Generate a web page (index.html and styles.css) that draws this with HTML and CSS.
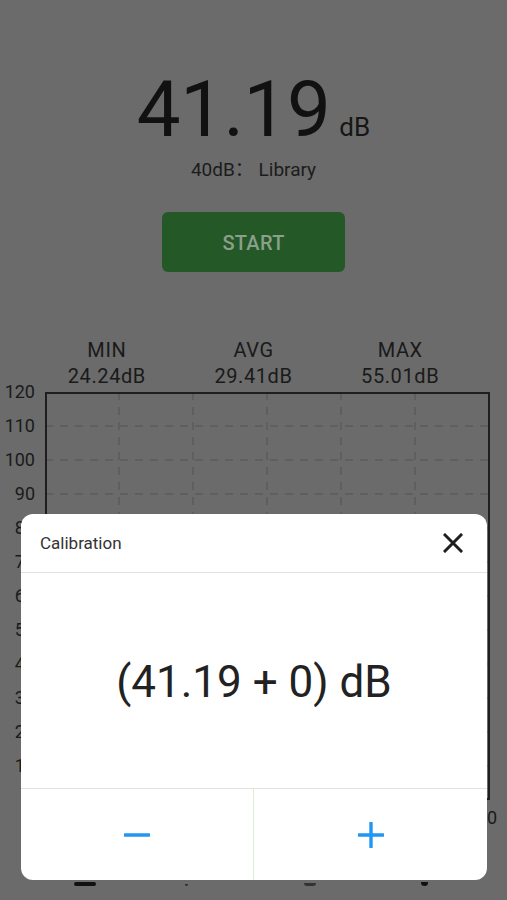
FILE: index.html
```html
<!DOCTYPE html>
<html lang="en">
<head>
<meta charset="utf-8">
<title>Sound Meter</title>
<link rel="stylesheet" href="styles.css">
</head>
<body>
<div class="screen">
  <div class="reading">
    <span class="value">41.19</span>
    <span class="unit">dB</span>
  </div>
  <div class="level">40dB： Library</div>
  <button class="start">START</button>

  <div class="stats">
    <div class="stat"><div>MIN</div><div>24.24dB</div></div>
    <div class="stat"><div>AVG</div><div>29.41dB</div></div>
    <div class="stat"><div>MAX</div><div>55.01dB</div></div>
  </div>

  <div class="chart">
    <div class="yaxis">
      <span>120</span><span>110</span><span>100</span><span>90</span><span>80</span><span>70</span><span>60</span>
      <span>50</span><span>40</span><span>30</span><span>20</span><span>10</span><span>0</span>
    </div>
    <div class="plot">
      <svg width="445" height="408" viewBox="0 0 445 408">
        <g stroke="#555" stroke-width="1" stroke-dasharray="8 7" fill="none">
          <line x1="0" y1="34" x2="445" y2="34"/>
          <line x1="0" y1="68" x2="445" y2="68"/>
          <line x1="0" y1="102" x2="445" y2="102"/>
          <line x1="0" y1="136" x2="445" y2="136"/>
          <line x1="0" y1="170" x2="445" y2="170"/>
          <line x1="0" y1="204" x2="445" y2="204"/>
          <line x1="0" y1="238" x2="445" y2="238"/>
          <line x1="0" y1="272" x2="445" y2="272"/>
          <line x1="0" y1="306" x2="445" y2="306"/>
          <line x1="0" y1="340" x2="445" y2="340"/>
          <line x1="0" y1="374" x2="445" y2="374"/>
          <line x1="74" y1="0" x2="74" y2="408"/>
          <line x1="148" y1="0" x2="148" y2="408"/>
          <line x1="222" y1="0" x2="222" y2="408"/>
          <line x1="296" y1="0" x2="296" y2="408"/>
          <line x1="370" y1="0" x2="370" y2="408"/>
        </g>
        <rect x="1" y="1" width="443" height="406" fill="none" stroke="#1e1e1e" stroke-width="2"/>
      </svg>
    </div>
  </div>
  <div class="xaxis"><span>0</span><span>30</span></div>

  <nav class="tabs">
    <span class="tab-bar"></span>
    <span class="tab-dot small"></span>
    <span class="tab-curve"></span>
    <span class="tab-dot"></span>
  </nav>
</div>

<div class="dialog">
  <div class="dialog-head">
    <span class="dialog-title">Calibration</span>
    <svg class="close" width="20" height="20" viewBox="0 0 20 20">
      <path d="M2 2 L18 18 M18 2 L2 18" stroke="#1f1f1f" stroke-width="3" stroke-linecap="square"/>
    </svg>
  </div>
  <div class="dialog-body">(41.19 + 0) dB</div>
  <div class="dialog-actions">
    <div class="action">
      <svg width="26" height="26" viewBox="0 0 26 26"><path d="M1 13 H25" stroke="#2196f3" stroke-width="3.4" stroke-linecap="round"/></svg>
    </div>
    <div class="action">
      <svg width="26" height="26" viewBox="0 0 26 26"><path d="M1 13 H25 M13 1 V25" stroke="#2196f3" stroke-width="3.4" stroke-linecap="round"/></svg>
    </div>
  </div>
</div>
</body>
</html>
```

FILE: styles.css
```css
* { box-sizing: border-box; }

html, body {
  margin: 0;
  padding: 0;
}

body {
  background: #6b6b6b;
  font-family: Roboto, "Noto Sans", "Noto Sans CJK SC", sans-serif;
  color: #161616;
  width: 507px;
  height: 900px;
  overflow: hidden;
}

.screen {
  display: flex;
  flex-direction: column;
  align-items: center;
  padding-top: 71px;
}

.reading {
  display: flex;
  align-items: baseline;
  gap: 9px;
  height: 78px;
  line-height: 78px;
}

.value {
  font-size: 78px;
  color: #111;
  letter-spacing: -0.5px;
}

.unit {
  font-size: 26px;
  color: #161616;
}

.level {
  margin-top: 10px;
  font-size: 19px;
  line-height: 22px;
  color: #1c1c1c;
}

.start {
  margin-top: 31px;
  width: 183px;
  height: 60px;
  border: none;
  border-radius: 6px;
  background: #245826;
  color: #8aa08b;
  font-family: Roboto, sans-serif;
  font-weight: 500;
  font-size: 20px;
  letter-spacing: 0.3px;
  padding-top: 3px;
}

.stats {
  margin-top: 65px;
  width: 440px;
  display: grid;
  grid-template-columns: repeat(3, 1fr);
}

.stat {
  text-align: center;
  font-size: 20px;
  letter-spacing: 0.6px;
  line-height: 26px;
  color: #1a1a1a;
}

.chart {
  margin-top: 3px;
  width: 507px;
  display: flex;
  align-items: flex-start;
  gap: 10px;
}

.yaxis {
  width: 35px;
  margin-top: -17px;
  margin-bottom: -17px;
  display: flex;
  flex-direction: column;
  align-items: flex-end;
}

.yaxis span {
  height: 34px;
  line-height: 34px;
  font-size: 18px;
  color: #1a1a1a;
}

.plot {
  width: 445px;
  height: 408px;
}

.plot svg { display: block; }

.xaxis {
  width: 507px;
  display: flex;
  justify-content: space-between;
  padding: 7px 10px 0 40px;
  font-size: 18px;
  line-height: 22px;
  color: #1a1a1a;
}

.tabs {
  margin-top: 33px;
  width: 507px;
  height: 24px;
  position: relative;
}

.tab-bar, .tab-dot, .tab-curve {
  position: absolute;
  bottom: 0;
  background: #111;
}

.tab-bar { left: 74px; width: 22px; height: 4px; border-radius: 2px; }
.tab-dot { left: 421px; width: 7px; height: 4px; border-radius: 0 0 4px 4px; }
.tab-dot.small { left: 185px; width: 3px; height: 2px; background: #333; }
.tab-curve { left: 304px; width: 12px; height: 3px; border-radius: 0 0 6px 6px; background: #333; }

.dialog {
  position: absolute;
  left: 21px;
  top: 514px;
  width: 466px;
  height: 366px;
  background: #fff;
  border-radius: 12px;
  display: flex;
  flex-direction: column;
  overflow: hidden;
}

.dialog-head {
  height: 59px;
  border-bottom: 1px solid #e2e2e2;
  display: flex;
  align-items: center;
  justify-content: space-between;
  padding: 0 24px 0 19px;
}

.dialog-title {
  font-size: 17px;
  color: #333;
}

.close { display: block; }

.dialog-body {
  height: 216px;
  border-bottom: 1px solid #e2e2e2;
  display: flex;
  align-items: center;
  justify-content: center;
  font-size: 44px;
  color: #222;
  padding-top: 2px;
}

.dialog-actions {
  flex: 1;
  display: grid;
  grid-template-columns: 233px 1fr;
}

.action {
  display: flex;
  align-items: center;
  justify-content: center;
}

.action svg { display: block; }

.action:first-child {
  border-right: 1px solid #dfeed6;
}
```
